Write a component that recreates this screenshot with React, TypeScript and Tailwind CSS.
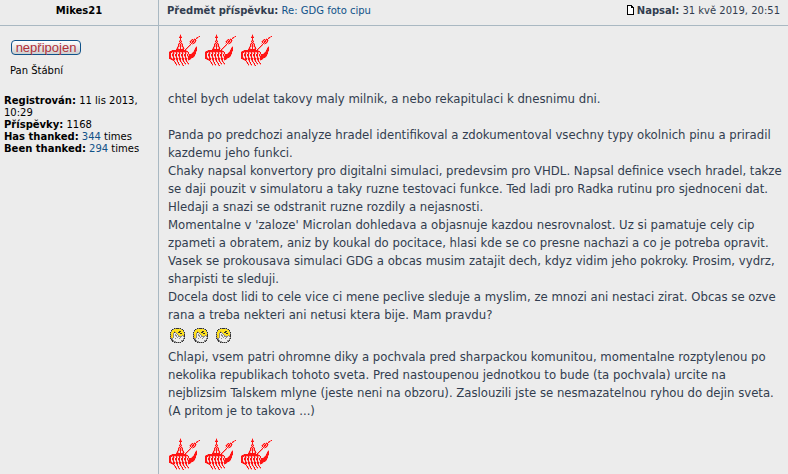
import type { ReactNode } from "react";

const shipRows = [
  "............a...................",
  "............#...................",
  "...........a#a................a#",
  "...........###..............a#a.",
  "............#.............a.#a..",
  "............#..........a#a##....",
  "...........a#a........a#a#a#a...",
  "...........#a#.......a#a##a#....",
  "...........a#a........#a#a#a....",
  "..........a#a#a......a.#a#a.....",
  "..........#a#a#.......#.a.......",
  "..........#a#a#......#a.........",
  ".........a#a#a#a....#a......a...",
  ".........#a.#.a#...#a......a#...",
  "........a#a.#.a#a.#a.......##...",
  "........########.#a.......a##...",
  "...a##############a.......###...",
  ".a##################.....a##a...",
  ".###a#aa#aa#aa#aa#aa#...a###....",
  ".##.a#a.#a.#a.#a.#a.#..a####....",
  ".##.##.##.##.##.##.#a######a....",
  ".##.##.##.##.##.##.#a######.....",
  ".##.a#.a#.a#.a#.a#.a######a.....",
  ".##a.#a.#a.#a.#a.#a.#####a......",
  ".###a##a##a##a##a##a###a........",
  "..a####.##.##.##.##.##a.........",
  "....a#a.a#.a#.a#.a#.a...........",
  "......#..#..#a.#a.#a............",
  "......a#.a#..#..#..#............",
  ".......#a.#..a#.a#.a#...........",
  "........#.a#..#..a..a...........",
  "........a..a..a#................",
];

const smileyRows = [
  "....kgkkkgk.....",
  "..kgyyyyyyygk...",
  ".kyyyyyyyyyyyk..",
  ".gyyoyyyykkyyg..",
  "kyyykgyykkyyyyk.",
  "gyygwwgyyykkyyg.",
  "kyygwgwgyyyyyyk.",
  "goygwggwgyyygok.",
  "kyygwwgwggggwgk.",
  "goygwwwgwwgwwwg.",
  "kggwwgwwwgwwwgk.",
  ".kgwwwwwwwwwwg..",
  ".gkgwwwwwwwggk..",
  "..kgggwwwwwgk...",
  "....kgkgkgk.....",
  "................",
];

const colours: Record<string, string> = {
  "#": "#ff1414",
  a: "#ff9a9a",
  k: "#333333",
  g: "#8c8c8c",
  y: "#ffe21f",
  o: "#e5aa10",
  w: "#efefef",
};

function PixelIcon({ rows, className }: { rows: string[]; className: string }) {
  return (
    <svg viewBox={`0 0 ${rows.length} ${rows.length}`} className={className} shapeRendering="crispEdges" aria-hidden="true">
      {rows.map((row, y) =>
        [...row].map((c, x) => (c === "." ? null : <rect key={`${x}-${y}`} x={x} y={y} width="1" height="1" fill={colours[c]} />))
      )}
    </svg>
  );
}

function ShipRow() {
  return (
    <div className="flex gap-1">
      {[0, 1, 2].map((i) => (
        <PixelIcon key={i} rows={shipRows} className="h-8 w-8" />
      ))}
    </div>
  );
}

function SmileyRow() {
  return (
    <div className="flex h-6 items-center gap-[7px] pl-[2px]">
      {[0, 1, 2].map((i) => (
        <PixelIcon key={i} rows={smileyRows} className="h-4 w-4" />
      ))}
    </div>
  );
}

function Stat({ label, children }: { label: string; children: ReactNode }) {
  return (
    <div>
      <dt className="inline font-bold">{label}:</dt> <dd className="inline">{children}</dd>
    </div>
  );
}

const linkClass = "text-[#105289] hover:underline";

export default function App() {
  return (
    <article className="grid min-h-screen grid-cols-[158px_1fr] grid-rows-[auto_1fr] bg-[#ececec] font-['DejaVu_Sans',Verdana,sans-serif] text-[10px] leading-3 text-black">
      <div className="border-b border-[#a9b8c2] pt-[5px] pb-2 text-center font-bold">Mikes21</div>
      <header className="flex justify-between border-b border-l border-[#a9b8c2] px-2 pt-[5px] pb-2 text-[#323d4f]">
        <div>
          <b>Předmět příspěvku:</b> <a href="#post" className={linkClass}>Re: GDG foto cipu</a>
        </div>
        <div className="flex gap-[2px]">
          <svg viewBox="0 0 9 10" className="h-[10px] w-[9px]" shapeRendering="crispEdges" aria-hidden="true">
            <path d="M1 0h5v1h1v1h1v8H1z" fill="#000" />
            <path d="M2 1h3v2h2v6H2z" fill="#fff" />
          </svg>
          <span><b>Napsal:</b> 31 kvě 2019, 20:51</span>
        </div>
      </header>
      <aside className="px-1 pt-[14px]">
        <div className="ml-[7px] flex h-[15px] w-[70px] items-center justify-center rounded-[4px] border border-[#105289] bg-linear-to-b from-white to-[#cfcfcf] font-['Liberation_Sans',Arial,sans-serif] text-[13px] leading-none text-[#b03038]">
          nepřipojen
        </div>
        <div className="mt-[10px] mb-[18px] pl-[6px]">Pan Štábní</div>
        <dl>
          <Stat label="Registrován">11 lis 2013, 10:29</Stat>
          <Stat label="Příspěvky">1168</Stat>
          <Stat label="Has thanked">
            <a href="#thanked" className={linkClass}>344</a> times
          </Stat>
          <Stat label="Been thanked">
            <a href="#been-thanked" className={linkClass}>294</a> times
          </Stat>
        </dl>
      </aside>
      <main className="border-l border-[#a9b8c2] pt-2 pr-1 pl-[9px] font-['DejaVu_Sans_Condensed','DejaVu_Sans',sans-serif] text-[13px] leading-[18px] text-[#323d4f]">
        <ShipRow />
        <p className="mt-6 mb-[18px]">chtel bych udelat takovy maly milnik, a nebo rekapitulaci k dnesnimu dni.</p>
        <p>Panda po predchozi analyze hradel identifikoval a zdokumentoval vsechny typy okolnich pinu a priradil kazdemu jeho funkci.</p>
        <p>
          Chaky napsal konvertory pro digitalni simulaci, predevsim pro VHDL. Napsal definice vsech hradel, takze se daji pouzit v simulatoru a taky ruzne testovaci funkce. Ted ladi pro Radka rutinu pro sjednoceni dat. Hledaji a snazi se odstranit ruzne rozdily a nejasnosti.
        </p>
        <p>
          Momentalne v 'zaloze' Microlan dohledava a objasnuje kazdou nesrovnalost. Uz si pamatuje cely cip zpameti a obratem, aniz by koukal do pocitace, hlasi kde se co presne nachazi a co je potreba opravit.
        </p>
        <p>Vasek se prokousava simulaci GDG a obcas musim zatajit dech, kdyz vidim jeho pokroky. Prosim, vydrz, sharpisti te sleduji.</p>
        <p>
          Docela dost lidi to cele vice ci mene peclive sleduje a myslim, ze mnozi ani nestaci zirat. Obcas se ozve rana a treba nekteri ani netusi ktera bije. Mam pravdu?
        </p>
        <SmileyRow />
        <p>
          Chlapi, vsem patri ohromne diky a pochvala pred sharpackou komunitou, momentalne rozptylenou po nekolika republikach tohoto sveta. Pred nastoupenou jednotkou to bude (ta pochvala) urcite na nejblizsim Talskem mlyne (jeste neni na obzoru). Zaslouzili jste se nesmazatelnou ryhou do dejin sveta.
        </p>
        <p className="mb-[18px]">(A pritom je to takova ...)</p>
        <ShipRow />
      </main>
    </article>
  );
}
